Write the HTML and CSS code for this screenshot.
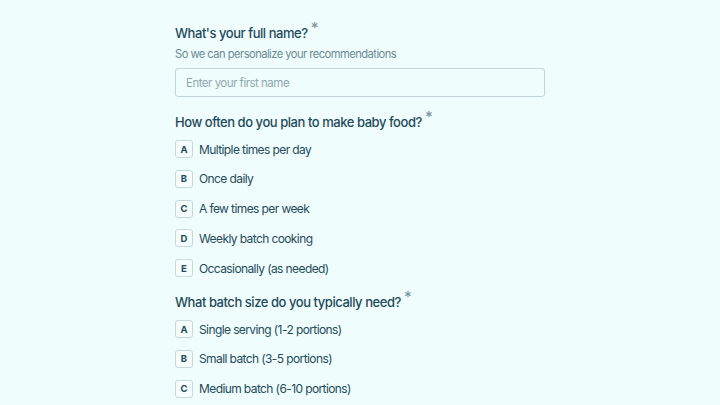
FILE: index.html
```html
<!DOCTYPE html>
<html lang="en">
<head>
    <meta charset="UTF-8">
    <meta name="viewport" content="width=device-width, initial-scale=1.0">
    <title>Baby Food Survey</title>
    <link rel="stylesheet" href="styles.css">
</head>
<body>
    <div class="form">
        <div class="question">
            <div class="label">What's your full name? <span class="req">*</span></div>
            <div class="hint">So we can personalize your recommendations</div>
            <input type="text" class="text-input" placeholder="Enter your first name">
        </div>

        <div class="question">
            <div class="label">How often do you plan to make baby food? <span class="req">*</span></div>
            <div class="options">
                <div class="option"><span class="key">A</span>Multiple times per day</div>
                <div class="option"><span class="key">B</span>Once daily</div>
                <div class="option"><span class="key">C</span>A few times per week</div>
                <div class="option"><span class="key">D</span>Weekly batch cooking</div>
                <div class="option"><span class="key">E</span>Occasionally (as needed)</div>
            </div>
        </div>

        <div class="question">
            <div class="label">What batch size do you typically need? <span class="req">*</span></div>
            <div class="options">
                <div class="option"><span class="key">A</span>Single serving (1-2 portions)</div>
                <div class="option"><span class="key">B</span>Small batch (3-5 portions)</div>
                <div class="option"><span class="key">C</span>Medium batch (6-10 portions)</div>
            </div>
        </div>
    </div>
</body>
</html>
```

FILE: styles.css
```css
* {
    margin: 0;
    padding: 0;
    box-sizing: border-box;
}

body {
    background: #f0fdfd;
    color: #1f4b5b;
    font-family: Inter, 'Noto Sans', sans-serif;
    height: 405px;
    overflow: hidden;
}

.form {
    width: 370px;
    margin: 0 auto;
    padding-top: 23px;
    display: flex;
    flex-direction: column;
    gap: 15px;
}

.label {
    font-size: 13px;
    font-weight: 500;
    line-height: 20px;
    letter-spacing: -0.45px;
}

.req {
    color: #7d979f;
    font-size: 15px;
    position: relative;
    top: -5px;
}

.hint {
    font-size: 11.2px;
    color: #6d8a93;
    margin-top: 2px;
    line-height: 18px;
    letter-spacing: -0.55px;
}

.text-input {
    display: block;
    width: 100%;
    height: 29px;
    margin-top: 5px;
    padding: 0 10px;
    border: 1px solid #c3d6da;
    border-radius: 3px;
    background: #f0fdfd;
    font-family: inherit;
    font-size: 11.5px;
    letter-spacing: -0.5px;
    color: #1f4b5b;
    outline: none;
}

.text-input::placeholder {
    color: #8fa8ae;
}

.options {
    margin-top: 8px;
    display: flex;
    flex-direction: column;
    gap: 11.75px;
}

.option {
    display: flex;
    align-items: center;
    gap: 6px;
    font-size: 12px;
    letter-spacing: -0.6px;
    height: 18px;
}

.key {
    width: 18px;
    height: 18px;
    border: 1px solid #c6d8dc;
    border-radius: 3px;
    background: #f6fefe;
    display: flex;
    align-items: center;
    justify-content: center;
    font-size: 9.5px;
    font-weight: 700;
    letter-spacing: 0;
}
```
